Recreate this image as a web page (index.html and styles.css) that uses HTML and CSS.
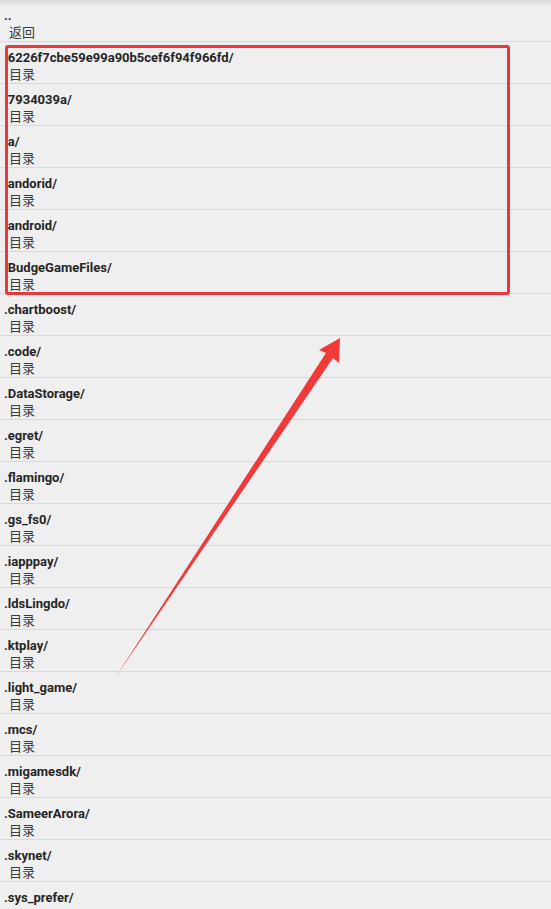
FILE: index.html
```html
<!DOCTYPE html>
<html lang="zh">
<head>
  <meta charset="UTF-8">
  <title>文件浏览</title>
  <link rel="stylesheet" href="styles.css">
</head>
<body>
  <div class="top-shadow"></div>
  <ul class="file-list">
    <li class="file-item"><span class="name">..</span><span class="sub">返回</span></li>
    <li class="file-item"><span class="name">.6226f7cbe59e99a90b5cef6f94f966fd/</span><span class="sub">目录</span></li>
    <li class="file-item"><span class="name">.7934039a/</span><span class="sub">目录</span></li>
    <li class="file-item"><span class="name">.a/</span><span class="sub">目录</span></li>
    <li class="file-item"><span class="name">.andorid/</span><span class="sub">目录</span></li>
    <li class="file-item"><span class="name">.android/</span><span class="sub">目录</span></li>
    <li class="file-item"><span class="name">.BudgeGameFiles/</span><span class="sub">目录</span></li>
    <li class="file-item"><span class="name">.chartboost/</span><span class="sub">目录</span></li>
    <li class="file-item"><span class="name">.code/</span><span class="sub">目录</span></li>
    <li class="file-item"><span class="name">.DataStorage/</span><span class="sub">目录</span></li>
    <li class="file-item"><span class="name">.egret/</span><span class="sub">目录</span></li>
    <li class="file-item"><span class="name">.flamingo/</span><span class="sub">目录</span></li>
    <li class="file-item"><span class="name">.gs_fs0/</span><span class="sub">目录</span></li>
    <li class="file-item"><span class="name">.iapppay/</span><span class="sub">目录</span></li>
    <li class="file-item"><span class="name">.ldsLingdo/</span><span class="sub">目录</span></li>
    <li class="file-item"><span class="name">.ktplay/</span><span class="sub">目录</span></li>
    <li class="file-item"><span class="name">.light_game/</span><span class="sub">目录</span></li>
    <li class="file-item"><span class="name">.mcs/</span><span class="sub">目录</span></li>
    <li class="file-item"><span class="name">.migamesdk/</span><span class="sub">目录</span></li>
    <li class="file-item"><span class="name">.SameerArora/</span><span class="sub">目录</span></li>
    <li class="file-item"><span class="name">.skynet/</span><span class="sub">目录</span></li>
    <li class="file-item"><span class="name">.sys_prefer/</span></li>
  </ul>

  <div class="highlight-box"></div>

  <svg class="arrow" width="551" height="909" viewBox="0 0 551 909">
    <polygon points="115,678 333,358 339,363 340,338 319,350 326,353" fill="#f2393a"/>
  </svg>
</body>
</html>
```

FILE: styles.css
```css
html, body {
  margin: 0;
  padding: 0;
}

body {
  background: #efefef;
  font-family: Roboto, "Noto Sans CJK SC", sans-serif;
  height: 909px;
  overflow: hidden;
  position: relative;
}

.top-shadow {
  position: absolute;
  top: 0;
  left: 0;
  right: 0;
  height: 6px;
  background: linear-gradient(#d9d9d9, rgba(239, 239, 239, 0));
}

.file-list {
  list-style: none;
  margin: 0;
  padding: 0;
}

.file-item {
  display: flex;
  flex-direction: column;
  padding: 7px 0 0 4px;
  height: 34px;
  border-bottom: 1px solid #d9d9d9;
}

.name {
  font-size: 13px;
  font-weight: bold;
  line-height: 17px;
  color: #262626;
}

.sub {
  font-size: 13px;
  line-height: 17px;
  color: #3a3a3a;
  padding-left: 5px;
}

.highlight-box {
  position: absolute;
  left: 5px;
  top: 45px;
  width: 499px;
  height: 244px;
  border: 3.5px solid #e8383d;
  border-radius: 3px;
}

.arrow {
  position: absolute;
  top: 0;
  left: 0;
}
```
